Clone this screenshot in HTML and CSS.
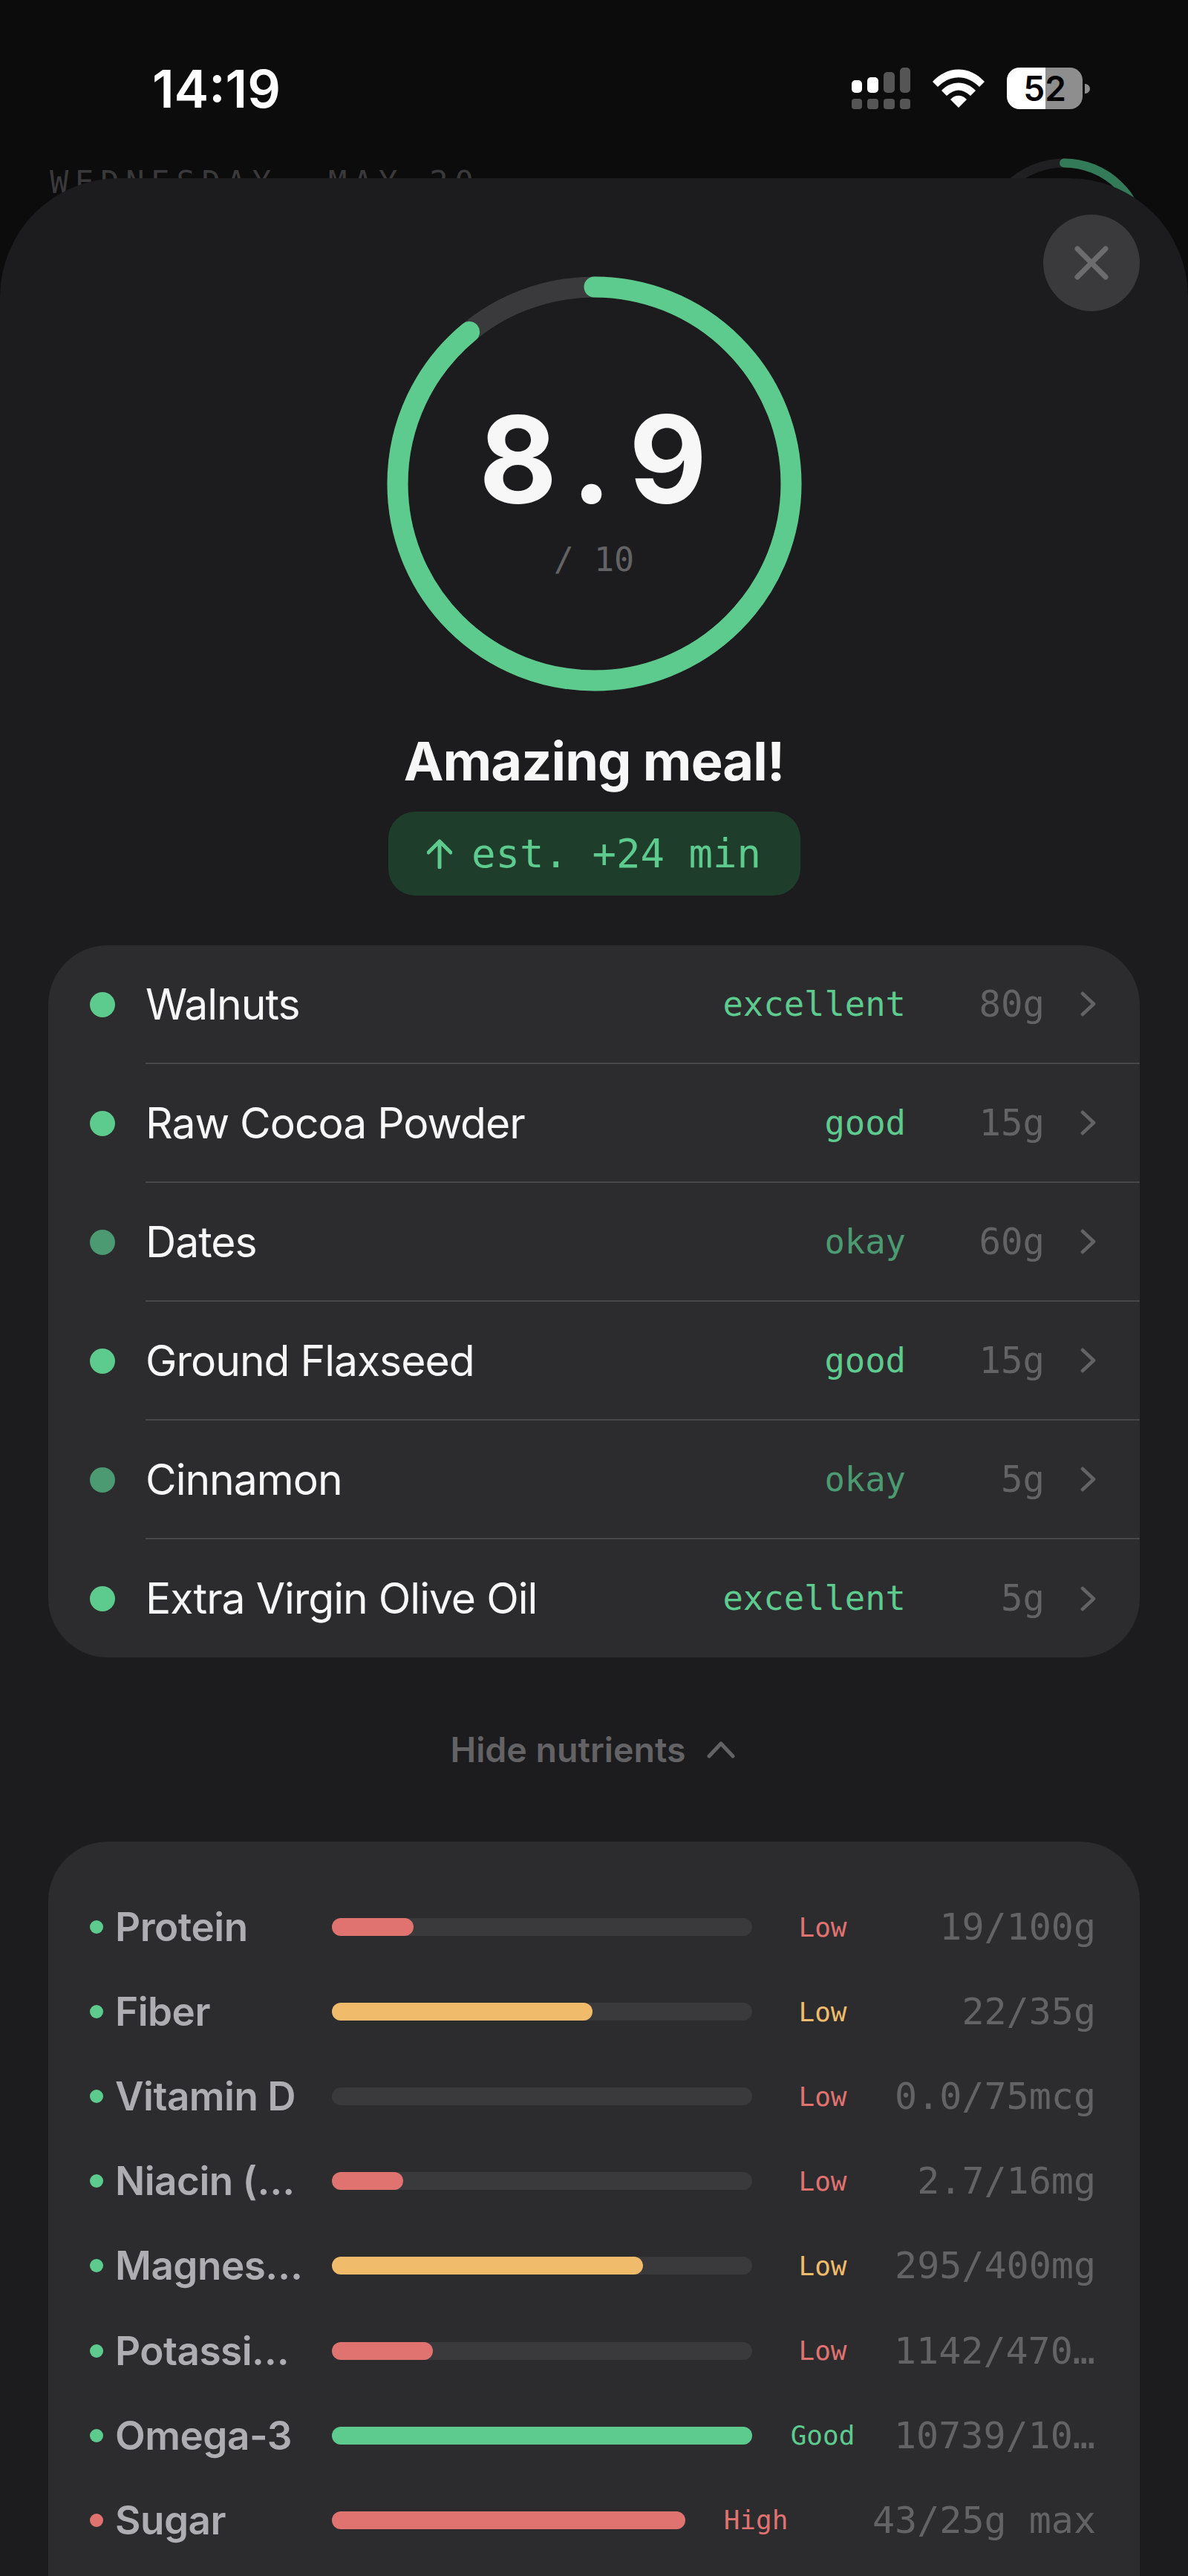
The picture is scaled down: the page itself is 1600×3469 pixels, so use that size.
FILE: index.html
```html
<!DOCTYPE html>
<html lang="en">
<head>
    <meta charset="UTF-8">
    <meta name="viewport" content="width=device-width, initial-scale=1.0">
    <title>Meal score</title>
    <link rel="stylesheet" href="styles.css">
</head>
<body>
    <div class="screen">
        <!-- Status bar -->
        <div class="status-bar">
            <span class="clock">14:19</span>
            <div class="status-icons">
                <svg class="signal" width="80" height="56" viewBox="0 0 80 56">
                    <rect x="0" y="17" width="14" height="17" rx="5" fill="#fff"/>
                    <rect x="21" y="13" width="15" height="21" rx="5" fill="#fff"/>
                    <rect x="43" y="6" width="15" height="28" rx="5" fill="#555"/>
                    <rect x="65" y="0" width="14" height="34" rx="5" fill="#555"/>
                    <rect x="0" y="42" width="14" height="14" rx="4" fill="#555"/>
                    <rect x="21" y="42" width="15" height="14" rx="4" fill="#555"/>
                    <rect x="43" y="42" width="15" height="14" rx="4" fill="#555"/>
                    <rect x="65" y="42" width="14" height="14" rx="4" fill="#555"/>
                </svg>
                <svg class="wifi" width="70" height="52" viewBox="0 0 70 52">
                    <path d="M0 17 C20 -5 50 -5 70 17 L63 24 C46 7 24 7 7 24 Z" fill="#fff"/>
                    <path d="M12 29 C25 15 45 15 58 29 L51 36 C40 26 30 26 19 36 Z" fill="#fff"/>
                    <path d="M24 41 C30 34 40 34 46 41 L35 52 Z" fill="#fff"/>
                </svg>
                <div class="battery">
                    <div class="battery-body"><span>52</span></div>
                    <div class="battery-cap"></div>
                </div>
            </div>
        </div>

        <!-- Page behind the sheet -->
        <div class="backdrop-head">
            <span class="backdrop-date">WEDNESDAY, MAY 20</span>
            <svg class="backdrop-ring" width="224" height="224" viewBox="0 0 224 224">
                <circle cx="112" cy="112" r="105.5" fill="none" stroke="#202022" stroke-width="12"/>
                <circle cx="112" cy="112" r="105.5" fill="none" stroke="#337a58" stroke-width="12" stroke-linecap="round" stroke-dasharray="300 660" transform="rotate(-90 112 112)"/>
            </svg>
        </div>

        <!-- Score sheet -->
        <div class="sheet">
            <button class="close-btn" type="button">
                <svg width="46" height="46" viewBox="0 0 46 46">
                    <path d="M4 4 L42 42 M42 4 L4 42" stroke="#6c6c6e" stroke-width="7" stroke-linecap="round"/>
                </svg>
            </button>

            <div class="score-ring">
                <svg class="score-ring-svg" width="559" height="559" viewBox="0 0 559 559">
                    <circle cx="279.5" cy="279.5" r="265" fill="none" stroke="#3a3a3c" stroke-width="28"/>
                    <circle cx="279.5" cy="279.5" r="265" fill="none" stroke="#5ecb8e" stroke-width="28" stroke-linecap="round" stroke-dasharray="1482 1665" transform="rotate(-90 279.5 279.5)"/>
                </svg>
                <div class="score-value"><span>8</span><span>.</span><span>9</span></div>
                <div class="score-max">/ 10</div>
            </div>

            <h1 class="verdict">Amazing meal!</h1>
            <div class="estimate">
                <svg width="34" height="40" viewBox="0 0 34 40">
                    <path d="M17 38 V3 M2 18 L17 3 L32 18" fill="none" stroke="#5ecb8e" stroke-width="5" stroke-linecap="round" stroke-linejoin="round"/>
                </svg>
                <span>est. +24 min</span>
            </div>

            <!-- Ingredients -->
            <div class="card ingredient-list">
                <div class="ingredient great">
                    <span class="dot"></span>
                    <div class="ingredient-main">
                        <span class="ingredient-name">Walnuts</span>
                        <span class="rating">excellent</span>
                        <span class="amount">80g</span>
                        <svg class="chevron" width="21" height="34" viewBox="0 0 21 34"><path d="M3 3 L18 17 L3 31" fill="none" stroke="#636366" stroke-width="4.5" stroke-linecap="round" stroke-linejoin="round"/></svg>
                    </div>
                </div>
                <div class="ingredient great">
                    <span class="dot"></span>
                    <div class="ingredient-main">
                        <span class="ingredient-name">Raw Cocoa Powder</span>
                        <span class="rating">good</span>
                        <span class="amount">15g</span>
                        <svg class="chevron" width="21" height="34" viewBox="0 0 21 34"><path d="M3 3 L18 17 L3 31" fill="none" stroke="#636366" stroke-width="4.5" stroke-linecap="round" stroke-linejoin="round"/></svg>
                    </div>
                </div>
                <div class="ingredient okay">
                    <span class="dot"></span>
                    <div class="ingredient-main">
                        <span class="ingredient-name">Dates</span>
                        <span class="rating">okay</span>
                        <span class="amount">60g</span>
                        <svg class="chevron" width="21" height="34" viewBox="0 0 21 34"><path d="M3 3 L18 17 L3 31" fill="none" stroke="#636366" stroke-width="4.5" stroke-linecap="round" stroke-linejoin="round"/></svg>
                    </div>
                </div>
                <div class="ingredient great">
                    <span class="dot"></span>
                    <div class="ingredient-main">
                        <span class="ingredient-name">Ground Flaxseed</span>
                        <span class="rating">good</span>
                        <span class="amount">15g</span>
                        <svg class="chevron" width="21" height="34" viewBox="0 0 21 34"><path d="M3 3 L18 17 L3 31" fill="none" stroke="#636366" stroke-width="4.5" stroke-linecap="round" stroke-linejoin="round"/></svg>
                    </div>
                </div>
                <div class="ingredient okay">
                    <span class="dot"></span>
                    <div class="ingredient-main">
                        <span class="ingredient-name">Cinnamon</span>
                        <span class="rating">okay</span>
                        <span class="amount">5g</span>
                        <svg class="chevron" width="21" height="34" viewBox="0 0 21 34"><path d="M3 3 L18 17 L3 31" fill="none" stroke="#636366" stroke-width="4.5" stroke-linecap="round" stroke-linejoin="round"/></svg>
                    </div>
                </div>
                <div class="ingredient great">
                    <span class="dot"></span>
                    <div class="ingredient-main">
                        <span class="ingredient-name">Extra Virgin Olive Oil</span>
                        <span class="rating">excellent</span>
                        <span class="amount">5g</span>
                        <svg class="chevron" width="21" height="34" viewBox="0 0 21 34"><path d="M3 3 L18 17 L3 31" fill="none" stroke="#636366" stroke-width="4.5" stroke-linecap="round" stroke-linejoin="round"/></svg>
                    </div>
                </div>
            </div>

            <div class="toggle-row">
                <span>Hide nutrients</span>
                <svg width="38" height="24" viewBox="0 0 38 24"><path d="M3 21 L19 4 L35 21" fill="none" stroke="#636366" stroke-width="5" stroke-linecap="round" stroke-linejoin="round"/></svg>
            </div>

            <!-- Nutrients -->
            <div class="card nutrient-list">
                <div class="nutrient">
                    <span class="mini-dot green"></span>
                    <span class="nutrient-name">Protein</span>
                    <div class="track"><div class="fill red" style="width: 19.5%"></div></div>
                    <span class="level text-red">Low</span>
                    <span class="value">19/100g</span>
                </div>
                <div class="nutrient">
                    <span class="mini-dot green"></span>
                    <span class="nutrient-name">Fiber</span>
                    <div class="track"><div class="fill yellow" style="width: 62%"></div></div>
                    <span class="level text-yellow">Low</span>
                    <span class="value">22/35g</span>
                </div>
                <div class="nutrient">
                    <span class="mini-dot green"></span>
                    <span class="nutrient-name">Vitamin D</span>
                    <div class="track"></div>
                    <span class="level text-red">Low</span>
                    <span class="value">0.0/75mcg</span>
                </div>
                <div class="nutrient">
                    <span class="mini-dot green"></span>
                    <span class="nutrient-name">Niacin (B3)</span>
                    <div class="track"><div class="fill red" style="width: 17%"></div></div>
                    <span class="level text-red">Low</span>
                    <span class="value">2.7/16mg</span>
                </div>
                <div class="nutrient">
                    <span class="mini-dot green"></span>
                    <span class="nutrient-name">Magnesium</span>
                    <div class="track"><div class="fill yellow" style="width: 74%"></div></div>
                    <span class="level text-yellow">Low</span>
                    <span class="value">295/400mg</span>
                </div>
                <div class="nutrient">
                    <span class="mini-dot green"></span>
                    <span class="nutrient-name">Potassium</span>
                    <div class="track"><div class="fill red" style="width: 24%"></div></div>
                    <span class="level text-red">Low</span>
                    <span class="value">1142/4700mg</span>
                </div>
                <div class="nutrient">
                    <span class="mini-dot green"></span>
                    <span class="nutrient-name">Omega-3</span>
                    <div class="track"><div class="fill green" style="width: 100%"></div></div>
                    <span class="level text-green">Good</span>
                    <span class="value">10739/1000mg</span>
                </div>
                <div class="nutrient wide">
                    <span class="mini-dot red"></span>
                    <span class="nutrient-name">Sugar</span>
                    <div class="track"><div class="fill red" style="width: 100%"></div></div>
                    <span class="level text-red">High</span>
                    <span class="value">43/25g max</span>
                </div>
            </div>
        </div>
    </div>
</body>
</html>
```
FILE: styles.css
```css
* {
    box-sizing: border-box;
}

body {
    margin: 0;
    background-color: #0c0c0d;
    font-family: Inter, "Noto Sans", sans-serif;
}

.screen {
    position: relative;
    width: 1600px;
    height: 3469px;
    overflow: hidden;
    background-color: #0c0c0d;
}

/* Status bar */
.status-bar {
    display: flex;
    justify-content: space-between;
    align-items: flex-start;
    padding: 80px 132px 0 205px;
    height: 213px;
}

.clock {
    color: #fff;
    font-size: 70px;
    font-weight: 600;
    line-height: 80px;
}

.status-icons {
    display: flex;
    align-items: flex-start;
    padding-top: 11px;
}

.signal {
    margin-right: 29px;
}

.wifi {
    margin-top: 2px;
    margin-right: 30px;
}

.battery {
    display: flex;
    align-items: center;
    gap: 3px;
}

.battery-body {
    width: 102px;
    height: 56px;
    border-radius: 17px;
    background: linear-gradient(90deg, #fff 51%, #8e8e8e 51%);
    color: #000;
    font-size: 46px;
    font-weight: 600;
    line-height: 56px;
    text-align: center;
}

.battery-cap {
    width: 7px;
    height: 13px;
    border-radius: 0 7px 7px 0;
    background-color: #8e8e8e;
}

/* Page behind the sheet */
.backdrop-head {
    display: flex;
    justify-content: space-between;
    padding: 0 55px 0 67px;
}

.backdrop-date {
    margin-top: 8px;
    color: #39393b;
    font-family: "DejaVu Sans Mono", monospace;
    font-size: 42px;
    letter-spacing: 8.8px;
    line-height: 50px;
}

/* Score sheet */
.sheet {
    position: absolute;
    top: 240px;
    left: 0;
    right: 0;
    bottom: 0;
    padding-top: 132px;
    border-radius: 160px 160px 0 0;
    background-color: #1c1c1e;
}

.close-btn {
    position: absolute;
    top: 49px;
    right: 65px;
    display: flex;
    align-items: center;
    justify-content: center;
    width: 130px;
    height: 130px;
    padding: 0;
    border: none;
    border-radius: 50%;
    background-color: #3a3a3c;
}

.score-ring {
    position: relative;
    display: flex;
    flex-direction: column;
    align-items: center;
    width: 559px;
    height: 559px;
    margin: 0 auto;
}

.score-ring-svg {
    position: absolute;
    top: 0;
    left: 0;
}

.score-value {
    display: flex;
    margin-top: 150px;
    margin-right: 7px;
    color: #f7f7f7;
    font-size: 162px;
    font-weight: 700;
    line-height: 192px;
}

.score-value span {
    width: 101px;
    text-align: center;
}

.score-max {
    margin-top: 14px;
    color: #636366;
    font-family: "DejaVu Sans Mono", monospace;
    font-size: 45px;
    line-height: 52px;
}

.verdict {
    margin: 50px 0 0;
    color: #f7f7f7;
    font-size: 72px;
    font-weight: 700;
    letter-spacing: -0.9px;
    line-height: 88px;
    text-align: center;
}

.estimate {
    display: flex;
    align-items: center;
    justify-content: center;
    gap: 26px;
    width: 555px;
    height: 113px;
    margin: 24px auto 0;
    border-radius: 36px;
    background-color: #1e3d2b;
    color: #5ecb8e;
    font-family: "DejaVu Sans Mono", monospace;
    font-size: 54px;
}

.card {
    margin: 67px 65px 0;
    border-radius: 80px;
    background-color: #2c2c2e;
}

/* Ingredients */
.ingredient {
    display: flex;
    align-items: stretch;
    padding-left: 56px;
}

.dot {
    flex: none;
    align-self: center;
    width: 34px;
    height: 34px;
    margin-right: 41px;
    border-radius: 50%;
}

.great .dot {
    background-color: #5ecb8e;
}

.okay .dot {
    background-color: #4c9a72;
}

.ingredient-main {
    flex: 1;
    display: flex;
    align-items: center;
    height: 160px;
    padding-right: 59px;
    border-bottom: 2px solid #48484a;
}

.ingredient:last-child .ingredient-main {
    height: 159px;
    border-bottom: none;
}

.ingredient-name {
    flex: 1;
    color: #f7f7f7;
    font-size: 57px;
    letter-spacing: -1px;
}

.rating {
    font-family: "DejaVu Sans Mono", monospace;
    font-size: 45.5px;
}

.great .rating {
    color: #5ecb8e;
}

.okay .rating {
    color: #4c9a72;
}

.amount {
    width: 187px;
    color: #636366;
    font-family: "DejaVu Sans Mono", monospace;
    font-size: 49px;
    text-align: right;
}

.chevron {
    flex: none;
    margin-left: 48px;
}

/* Toggle */
.toggle-row {
    display: flex;
    align-items: center;
    justify-content: center;
    gap: 28px;
    height: 248px;
    padding-right: 4px;
    color: #636366;
    font-size: 46.5px;
    font-weight: 600;
}

/* Nutrients */
.nutrient-list {
    margin-top: 0;
    height: 1200px;
    padding: 58px 59px 0 56px;
}

.nutrient {
    display: flex;
    align-items: center;
    height: 114.1px;
}

.mini-dot {
    flex: none;
    width: 18px;
    height: 18px;
    margin-right: 16px;
    border-radius: 50%;
}

.nutrient-name {
    flex: none;
    width: 256px;
    margin-right: 36px;
    overflow: hidden;
    color: #aeaeb2;
    font-size: 53px;
    font-weight: 600;
    letter-spacing: -0.5px;
    text-overflow: ellipsis;
    white-space: nowrap;
}

.track {
    flex: 1;
    height: 24px;
    border-radius: 12px;
    background-color: #3a3a3c;
}

.fill {
    height: 100%;
    border-radius: 12px;
}

.level {
    flex: none;
    width: 90px;
    margin-left: 50px;
    margin-right: 51px;
    font-family: "DejaVu Sans Mono", monospace;
    font-size: 36px;
    text-align: center;
}

.value {
    flex: none;
    width: 272px;
    overflow: hidden;
    color: #636366;
    font-family: "DejaVu Sans Mono", monospace;
    font-size: 50px;
    text-align: right;
    text-overflow: ellipsis;
    white-space: nowrap;
}

.wide .value {
    width: 362px;
}

.red {
    background-color: #e07270;
}

.yellow {
    background-color: #f0bc6b;
}

.green {
    background-color: #5ecb8e;
}

.text-red {
    color: #e07270;
}

.text-yellow {
    color: #f0bc6b;
}

.text-green {
    color: #5ecb8e;
}
```
